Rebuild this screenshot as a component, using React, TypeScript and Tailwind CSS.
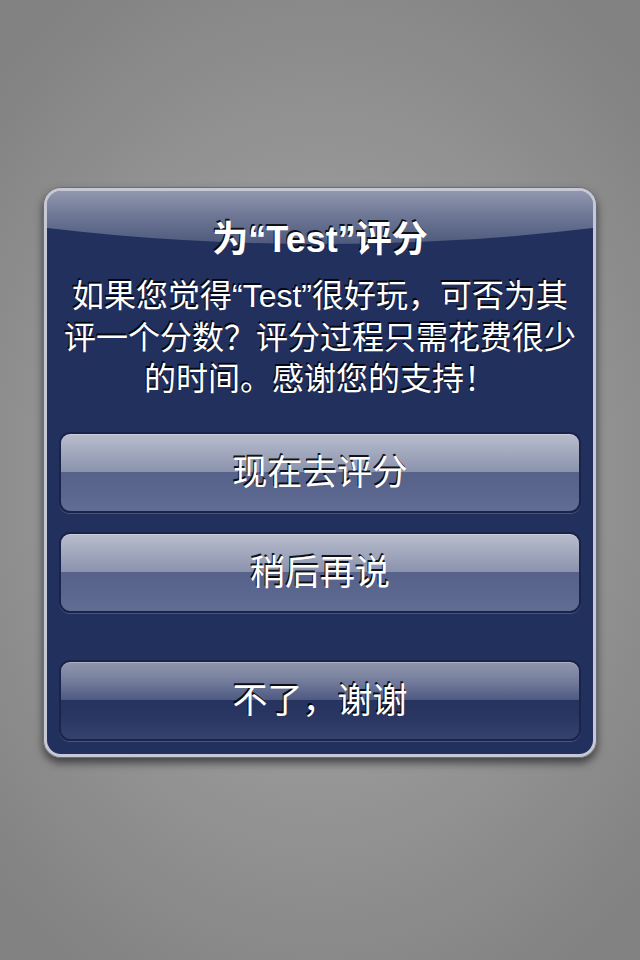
import React from 'react';

const FONT = '"Liberation Sans", "Noto Sans CJK SC", sans-serif';

interface AlertButtonProps {
  label: string;
  cancel?: boolean;
}

function AlertButton({ label, cancel }: AlertButtonProps) {
  const bg = cancel
    ? 'bg-[linear-gradient(180deg,#8f96ad_0%,#7a83a0_20%,#4f5a83_49%,#27335f_50%,#2a3662_70%,#36426d_100%)]'
    : 'bg-[linear-gradient(180deg,#b9bece_0%,#a6acc0_20%,#8b93ad_49%,#56628a_50%,#5a668d_75%,#616d93_100%)]';
  return (
    <button
      className={`h-[81px] w-full rounded-[11px] border-2 border-[#1a2349] ${bg} shadow-[0_1px_0_rgba(140,155,200,0.35),inset_0_1px_0_rgba(255,255,255,0.25)] text-white text-[35px] leading-none [text-shadow:-1px_-2px_0_rgba(0,0,0,0.9)]`}
      style={{ fontFamily: FONT }}
    >
      {label}
    </button>
  );
}

export default function App() {
  return (
    <div
      className="min-h-[960px] w-full bg-[radial-gradient(ellipse_70%_60%_at_50%_50%,#a9a9a9_0%,#999999_45%,#828282_100%)] pt-[187px]"
      style={{ fontFamily: FONT }}
    >
      <div className="mx-[43px] rounded-[18px] border border-[#6b6e78] shadow-[0_5px_9px_rgba(0,0,0,0.55)]">
        <div className="relative overflow-hidden rounded-[17px] border-[3px] border-[#c6c9d5] bg-[#22305e]">
          {/* top gloss */}
          <div className="pointer-events-none absolute left-1/2 top-[-353px] h-[406px] w-[1400px] -translate-x-1/2 rounded-[50%] bg-[linear-gradient(180deg,rgba(255,255,255,0.5)_353px,rgba(255,255,255,0.34)_378px,rgba(255,255,255,0.2)_406px)]" />
          <div className="relative flex flex-col px-[12px] pt-[27px] pb-[13px]">
            <h1 className="text-center text-[36px] font-bold leading-[44px] text-white [text-shadow:-1px_-2px_0_rgba(0,0,0,0.85)]">
              为“Test”评分
            </h1>
            <p className="mt-[14px] text-center text-[32px] leading-[41.5px] text-white [text-shadow:-1px_-2px_0_rgba(0,0,0,0.85)]">
              <span className="block">如果您觉得“Test”很好玩，可否为其</span>
              <span className="block">评一个分数？评分过程只需花费很少</span>
              <span className="block">的时间。感谢您的支持！</span>
            </p>
            <div className="mt-[31px] flex flex-col gap-[19px]">
              <AlertButton label="现在去评分" />
              <AlertButton label="稍后再说" />
            </div>
            <div className="mt-[47px]">
              <AlertButton label="不了，谢谢" cancel />
            </div>
          </div>
        </div>
      </div>
    </div>
  );
}
